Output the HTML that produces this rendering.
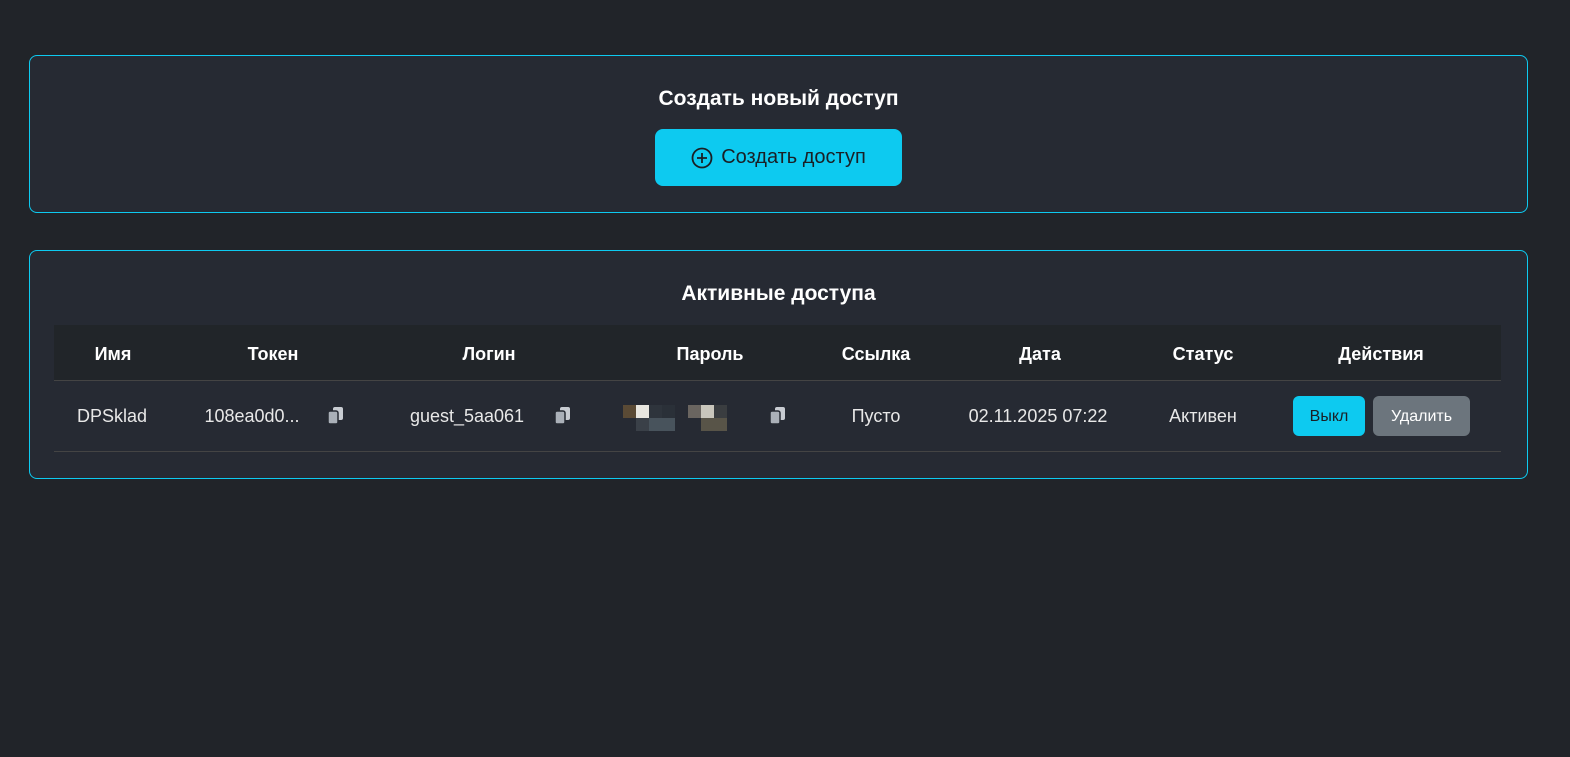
<!DOCTYPE html><html><head><meta charset="utf-8"><style>
body{margin:0;background:#212429;font-family:"Liberation Sans",sans-serif;color:#fff;width:1570px;height:757px;position:relative;overflow:hidden}
.card{position:absolute;left:29px;width:1497px;background:#262a33;border:1px solid #0dcaf0;border-radius:8px}
h2{margin:0;font-size:21px;font-weight:bold;text-align:center;position:absolute;width:100%}
.btn{position:absolute;left:625px;top:73px;width:247px;height:57px;background:#0dcaf0;border-radius:8px;color:#1a1f25;font-size:20px;display:flex;align-items:center;justify-content:center;gap:8px}
.t{position:absolute;font-size:18px;transform:translateX(-50%);white-space:nowrap}
.hd{font-weight:bold;top:344px}
.rw{top:406px;color:#e8e8e8}
.px{position:absolute;width:13px;height:13px}
.cp{position:absolute;top:405px;width:20px;height:20px}
</style></head><body>
<div class="card" style="top:55px;height:156px"><h2 style="top:31px">Создать новый доступ</h2>
<div class="btn"><svg width="22" height="22" viewBox="0 0 22 22"><circle cx="11" cy="11" r="9.5" fill="none" stroke="#1a1f25" stroke-width="1.8"/><path d="M11 6v10M6 11h10" stroke="#1a1f25" stroke-width="1.8"/></svg>Создать доступ</div></div>
<div class="card" style="top:250px;height:227px"><h2 style="top:31px">Активные доступа</h2></div>
<div style="position:absolute;left:54px;top:325px;width:1447px;height:55px;background:#212529;border-bottom:1px solid #444"></div>
<div style="position:absolute;left:54px;top:451px;width:1447px;height:1px;background:#444"></div>
<div class="t hd" style="left:113px">Имя</div><div class="t hd" style="left:273px">Токен</div><div class="t hd" style="left:489px">Логин</div><div class="t hd" style="left:710px">Пароль</div><div class="t hd" style="left:876px">Ссылка</div><div class="t hd" style="left:1040px">Дата</div><div class="t hd" style="left:1203px">Статус</div><div class="t hd" style="left:1381px">Действия</div>
<div class="t rw" style="left:112px">DPSklad</div><div class="t rw" style="left:252px">108ea0d0...</div><div class="t rw" style="left:467px">guest_5aa061</div><div class="t rw" style="left:876px">Пусто</div><div class="t rw" style="left:1038px">02.11.2025 07:22</div><div class="t rw" style="left:1203px">Активен</div>
<svg class="cp" style="left:326px" viewBox="0 0 20 20"><rect x="7" y="2" width="10" height="13" rx="2" fill="#c8ccd2"/><rect x="2" y="6" width="10" height="13" rx="2" fill="#aab0b8" stroke="#262a33" stroke-width="1.5"/></svg>
<svg class="cp" style="left:553px" viewBox="0 0 20 20"><rect x="7" y="2" width="10" height="13" rx="2" fill="#c8ccd2"/><rect x="2" y="6" width="10" height="13" rx="2" fill="#aab0b8" stroke="#262a33" stroke-width="1.5"/></svg>
<svg class="cp" style="left:768px" viewBox="0 0 20 20"><rect x="7" y="2" width="10" height="13" rx="2" fill="#c8ccd2"/><rect x="2" y="6" width="10" height="13" rx="2" fill="#aab0b8" stroke="#262a33" stroke-width="1.5"/></svg>
<div class="px" style="left:623px;top:405px;background:#5a4a35"></div><div class="px" style="left:636px;top:405px;background:#e8e6e0"></div><div class="px" style="left:649px;top:405px;background:#2e343c"></div><div class="px" style="left:662px;top:405px;background:#2a3038"></div>
<div class="px" style="left:688px;top:405px;background:#6a6560"></div><div class="px" style="left:701px;top:405px;background:#c9c6bc"></div><div class="px" style="left:714px;top:405px;background:#3a3d40"></div>
<div class="px" style="left:636px;top:418px;background:#3a4048"></div><div class="px" style="left:649px;top:418px;width:26px;background:#48535c"></div><div class="px" style="left:701px;top:418px;width:26px;background:#585448"></div>
<div style="position:absolute;left:1293px;top:396px;width:72px;height:40px;background:#0dcaf0;border-radius:6px;color:#1a1f25;font-size:16px;display:flex;align-items:center;justify-content:center;padding-top:2px;box-sizing:border-box">Выкл</div>
<div style="position:absolute;left:1373px;top:396px;width:97px;height:40px;background:#6c757d;border-radius:6px;color:#fff;font-size:16px;display:flex;align-items:center;justify-content:center;padding-top:2px;box-sizing:border-box">Удалить</div>
</body></html>
